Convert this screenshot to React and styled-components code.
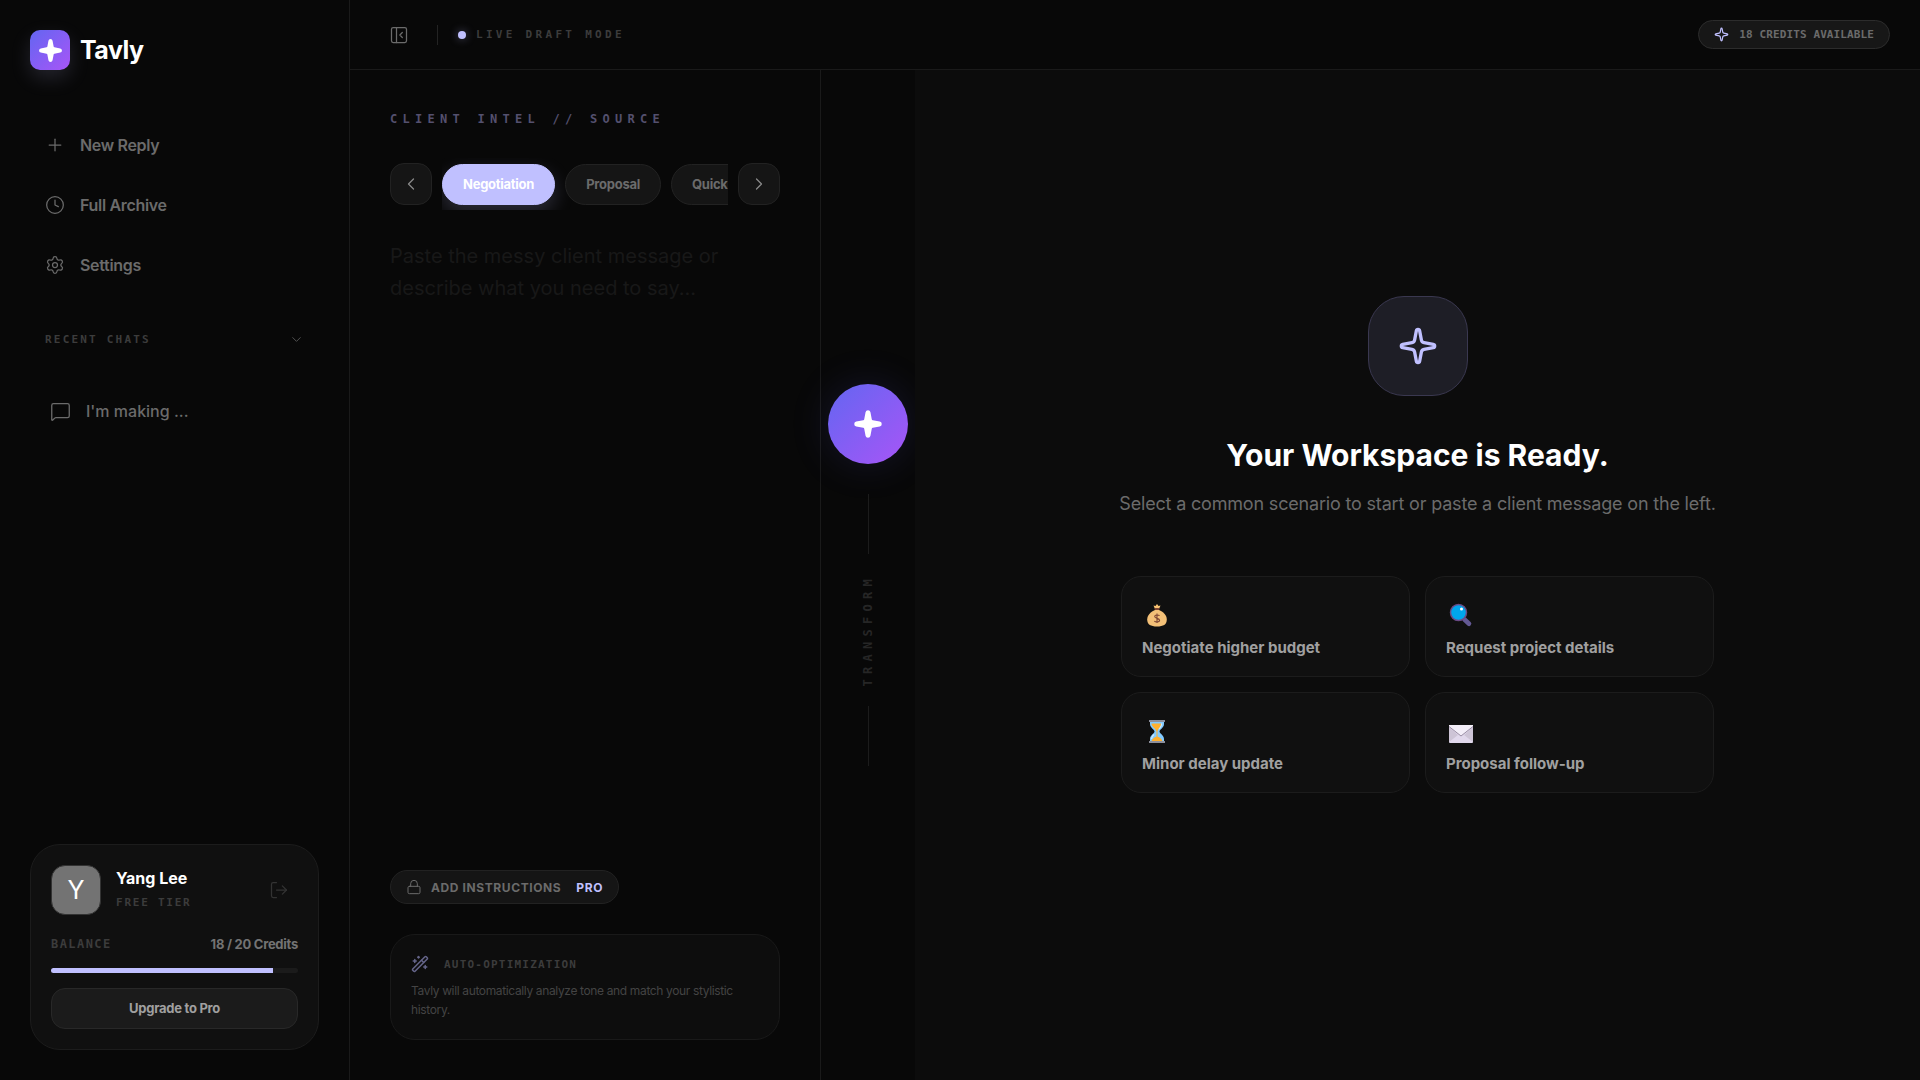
import React, { useRef, useState } from 'react';
import styled, { createGlobalStyle, css } from 'styled-components';
import {
  Plus,
  Clock,
  Settings,
  ChevronDown,
  ChevronLeft,
  ChevronRight,
  MessageSquare,
  LogOut,
  PanelLeftClose,
  Lock,
  Sparkle,
  WandSparkles,
} from 'lucide-react';

const GlobalStyle = createGlobalStyle`
  * {
    box-sizing: border-box;
  }

  html, body, #root {
    height: 100%;
    margin: 0;
  }

  body {
    background: #080808;
    color: #ffffff;
    font-family: Inter, 'Liberation Sans', sans-serif;
  }

  button {
    font-family: inherit;
    cursor: pointer;
  }
`;

const mono = css`
  font-family: 'DejaVu Sans Mono', 'Liberation Mono', monospace;
  font-weight: 700;
  text-transform: uppercase;
`;

const accent = '#c0c0ff';
const brandGradient = 'linear-gradient(135deg, #6366f1 0%, #a855f7 100%)';

const Shell = styled.div`
  display: grid;
  grid-template-columns: 350px minmax(0, 1fr);
  min-height: 100vh;
`;

const Sidebar = styled.aside`
  display: flex;
  flex-direction: column;
  padding: 30px;
  border-right: 1px solid #1a1a1a;
`;

const Brand = styled.div`
  display: flex;
  align-items: center;
  gap: 10px;
  font-size: 25px;
  font-weight: 700;
  line-height: 40px;
  letter-spacing: -0.02em;
`;

const BrandMark = styled.span`
  display: grid;
  place-items: center;
  width: 40px;
  height: 40px;
  border-radius: 10px;
  background: ${brandGradient};
  box-shadow: 0 8px 20px rgba(192, 192, 255, 0.15);
`;

const Nav = styled.nav`
  display: flex;
  flex-direction: column;
  gap: 8px;
  margin-top: 49px;
`;

const NavItem = styled.a`
  display: flex;
  align-items: center;
  gap: 15px;
  height: 52px;
  padding: 0 15px;
  color: #6b6b6b;
  font-size: 16px;
  font-weight: 600;
  letter-spacing: -0.02em;
  text-decoration: none;
`;

const RecentToggle = styled.button`
  display: flex;
  align-items: center;
  justify-content: space-between;
  height: 30px;
  margin-top: 33px;
  padding: 0 15px;
  border: 0;
  background: none;
  color: #3c3c3c;
  font-size: 11px;
  letter-spacing: 0.2em;

  && {
    ${mono}
  }

  svg {
    color: #555555;
  }
`;

const ChatLink = styled.a`
  display: flex;
  align-items: center;
  gap: 15px;
  margin-top: 37px;
  padding: 0 20px;
  color: #6b6b6b;
  font-size: 16px;
  font-weight: 500;
  line-height: 40px;
  text-decoration: none;
`;

const AccountCard = styled.section`
  display: flex;
  flex-direction: column;
  margin-top: auto;
  padding: 20px;
  border: 1px solid #1c1c1c;
  border-radius: 30px;
  background: #101010;
`;

const AccountRow = styled.div`
  display: flex;
  align-items: center;
  gap: 15px;
`;

const Avatar = styled.div`
  display: grid;
  place-items: center;
  width: 50px;
  height: 50px;
  border: 1px solid #333333;
  border-radius: 14px;
  background: #737373;
  font-size: 25px;
`;

const AccountInfo = styled.div`
  flex: 1;
`;

const AccountName = styled.div`
  padding-bottom: 2px;
  overflow: hidden;
  font-size: 16px;
  font-weight: 700;
  line-height: 16px;
  white-space: nowrap;
`;

const Tier = styled.div`
  ${mono}
  margin-top: 7px;
  color: #3c3c3c;
  font-size: 11px;
  line-height: 16px;
  letter-spacing: 0.16em;
`;

const IconButton = styled.button`
  display: grid;
  place-items: center;
  width: 38px;
  height: 38px;
  padding: 0;
  border: 0;
  background: none;
  color: ${props => props.$color};
`;

const BalanceRow = styled.div`
  display: flex;
  align-items: center;
  justify-content: space-between;
  margin-top: 21px;
  font-size: 13px;
  font-weight: 700;
  line-height: 16px;
  letter-spacing: -0.02em;
  color: #737373;
`;

const BalanceLabel = styled.span`
  ${mono}
  color: #3c3c3c;
  font-size: 12px;
  letter-spacing: 0.12em;
`;

const Track = styled.div`
  height: 5px;
  margin-top: 16px;
  border-radius: 5px;
  overflow: hidden;
  background: #1b1b1b;
`;

const Fill = styled.div`
  height: 100%;
  background: ${accent};
`;

const UpgradeButton = styled.button`
  height: 41px;
  margin-top: 15px;
  padding: 0 20px 2px;
  border: 1px solid #282828;
  border-radius: 14px;
  background: #1b1b1b;
  color: #a0a0a0;
  font-size: 13px;
  font-weight: 700;
  letter-spacing: -0.02em;
`;

const Main = styled.main`
  display: flex;
  flex-direction: column;
`;

const TopBar = styled.header`
  display: flex;
  align-items: center;
  height: 70px;
  padding: 0 30px;
  border-bottom: 1px solid #1a1a1a;
`;

const ModeLabel = styled.div`
  ${mono}
  display: flex;
  align-items: center;
  gap: 10px;
  height: 20px;
  margin-left: 19px;
  padding-left: 20px;
  border-left: 1px solid #232323;
  color: #3c3c3c;
  font-size: 11px;
  letter-spacing: 0.3em;
`;

const LiveDot = styled.span`
  width: 8px;
  height: 8px;
  border-radius: 50%;
  background: ${accent};
  box-shadow: 0 0 10px rgba(192, 192, 255, 0.4);
`;

const CreditsBadge = styled.div`
  ${mono}
  display: flex;
  align-items: center;
  gap: 10px;
  height: 29px;
  margin-left: auto;
  padding: 0 15px;
  border: 1px solid #2c2c2c;
  border-radius: 15px;
  background: #171717;
  color: #6b6b6b;
  font-size: 11px;
  letter-spacing: 0.01em;

  svg {
    color: ${accent};
  }
`;

const Workspace = styled.div`
  display: grid;
  flex: 1;
  grid-template-columns: 30% 94px minmax(0, 1fr);
`;

const SourcePanel = styled.section`
  display: flex;
  flex-direction: column;
  padding: 40px;
  border-right: 1px solid #1a1a1a;
`;

const PanelTitle = styled.h2`
  ${mono}
  margin: 0;
  color: #54506e;
  font-size: 12px;
  line-height: 18px;
  letter-spacing: 0.44em;
`;

const Scroller = styled.div`
  display: flex;
  align-items: center;
  gap: 10px;
  margin-top: 30px;
`;

const ArrowButton = styled.button`
  display: grid;
  flex-shrink: 0;
  place-items: center;
  width: 42px;
  height: 42px;
  padding: 0;
  border: 1px solid #222222;
  border-radius: 14px;
  background: #151515;
  color: #8a8a8a;
`;

const Chips = styled.div`
  display: flex;
  flex: 1;
  gap: 10px;
  padding: 6px 0 5px;
  overflow: hidden;
`;

const Chip = styled.button`
  flex-shrink: 0;
  height: 41px;
  padding: 0 20px 2px;
  border: 1px solid ${props => (props.$active ? accent : '#222222')};
  border-radius: 21px;
  background: ${props => (props.$active ? accent : '#151515')};
  box-shadow: ${props => (props.$active ? '0 8px 20px rgba(192, 192, 255, 0.2)' : 'none')};
  color: ${props => (props.$active ? '#ffffff' : '#6b6b6b')};
  font-size: 13px;
  font-weight: 700;
  letter-spacing: -0.02em;
`;

const MessageInput = styled.textarea`
  flex: 1;
  min-height: 160px;
  margin-top: 30px;
  padding: 0;
  border: 0;
  outline: 0;
  resize: none;
  background: none;
  color: #e0e0e0;
  font-family: inherit;
  font-size: 20px;
  line-height: 32px;

  &::placeholder {
    color: #181818;
    opacity: 1;
  }
`;

const InstructionsButton = styled.button`
  display: flex;
  align-items: center;
  align-self: flex-start;
  gap: 9px;
  height: 34px;
  margin-top: 20px;
  padding: 0 15px;
  border: 1px solid #222222;
  border-radius: 17px;
  background: #151515;
  color: #6b6b6b;
  font-size: 12px;
  font-weight: 700;
  letter-spacing: 0.05em;
`;

const ProTag = styled.span`
  margin-left: 6px;
  color: ${accent};
`;

const OptimizationCard = styled.section`
  margin-top: 30px;
  padding: 20px;
  border: 1px solid #191919;
  border-radius: 25px;
  background: #0d0d0d;
`;

const OptimizationTitle = styled.h3`
  ${mono}
  display: flex;
  align-items: center;
  gap: 15px;
  margin: 0 0 8px;
  color: #3c3c3c;
  font-size: 11px;
  line-height: 17px;
  letter-spacing: 0.11em;

  svg {
    color: #65658a;
  }
`;

const OptimizationText = styled.p`
  margin: 0;
  color: #444444;
  font-size: 12px;
  line-height: 19px;
  letter-spacing: -0.03em;
`;

const TransformRail = styled.div`
  display: flex;
  flex-direction: column;
  align-items: center;
  justify-content: center;
`;

const TransformButton = styled.button`
  display: grid;
  place-items: center;
  width: 80px;
  height: 80px;
  margin-bottom: 30px;
  padding: 0;
  border: 0;
  border-radius: 50%;
  background: ${brandGradient};
  box-shadow: 0 0 40px rgba(99, 102, 241, 0.15);
  color: #ffffff;
`;

const RailLine = styled.div`
  width: 1px;
  height: 60px;
  background: #1c1c1c;
`;

const RailLabel = styled.div`
  ${mono}
  margin: 20px 0;
  color: #262626;
  font-size: 12px;
  line-height: 14px;
  letter-spacing: 0.44em;
  writing-mode: vertical-rl;
  transform: rotate(180deg);
`;

const OutputPanel = styled.section`
  display: flex;
  flex-direction: column;
  align-items: center;
  justify-content: center;
  padding: 40px 40px 102px;
  background: #0c0c0c;
`;

const HeroIcon = styled.div`
  display: grid;
  place-items: center;
  width: 100px;
  height: 100px;
  border: 1px solid #3a3850;
  border-radius: 36px;
  background: #1e1e26;
  color: ${accent};
`;

const Heading = styled.h1`
  margin: 40px 0 0;
  font-size: 30px;
  font-weight: 700;
  line-height: 39px;
`;

const Subheading = styled.p`
  margin: 16px 0 0;
  color: #6b6b6b;
  font-size: 18px;
  line-height: 26px;
  letter-spacing: -0.01em;
`;

const ScenarioGrid = styled.div`
  display: grid;
  grid-template-columns: 1fr 1fr;
  gap: 15px;
  width: 100%;
  max-width: 593px;
  margin-top: 59px;
`;

const ScenarioCard = styled.button`
  display: flex;
  flex-direction: column;
  align-items: flex-start;
  gap: 7px;
  height: 101px;
  padding: 26px 20px 16px;
  border: 1px solid #1c1c1c;
  border-radius: 20px;
  background: #101010;
  color: #a0a0a0;
  font-size: 15px;
  font-weight: 700;
  line-height: 24px;
`;

const MoneyBag = () => (
  <svg width="30" height="26" viewBox="0 0 30 26" aria-hidden="true">
    <path d="M11.5 2.500l2 .5 1.500-2 1.500 2 2-.5-1.500 3.500h-4z" fill="#f9c372" />
    <rect x="12.5" y="5" width="5" height="2" rx="1" fill="#7d4533" />
    <path d="M13 7h4c4 1.500 7.800 5 7.800 9.500 0 5-3.500 7-9.800 7s-9.800-2-9.800-7C5.200 12 9 8.500 13 7z" fill="#f3c077" />
    <path d="M17.500 12.800c-.5-1-4.800-1.400-4.800.8 0 2.300 4.900 1.300 4.900 3.700 0 2.200-4.500 2-5.200.6M15 10.500v9.500" fill="none" stroke="#7d4533" strokeWidth="1.1" />
  </svg>
);

const Magnifier = () => (
  <svg width="30" height="26" viewBox="0 0 30 26" aria-hidden="true">
    <path d="M18.500 16.500l4.500 4.200" stroke="#635994" strokeWidth="4.600" strokeLinecap="round" />
    <circle cx="12.5" cy="9.500" r="8" fill="#00a6ed" stroke="#6b4a86" strokeWidth="1.5" />
    <circle cx="15.500" cy="6" r="1.500" fill="#ffffff" />
  </svg>
);

const Hourglass = () => (
  <svg width="30" height="26" viewBox="0 0 30 26" aria-hidden="true">
    <path d="M8 2h14v3c0 4-4.500 5.500-4.500 7.500S22 16 22 20v3H8v-3c0-4 4.500-5.500 4.500-7.500S8 9 8 5z" fill="#83cbff" />
    <path d="M19.500 4.500c0 3-1 4-3 5.500M12 15.500c-1.500 1.200-2.400 2.500-2.500 4.500" fill="none" stroke="#d3edff" strokeWidth="1.2" />
    <path d="M9.500 4.500h9.500c0 3.500-3 5-3.500 8h-1c-.5-3-5-4.500-5-8zM14.500 12h1v5.500c2 1 4.800 2.500 4.800 5H9.700c0-2.500 2.800-4 4.800-5z" fill="#ffb02e" />
    <path d="M7 1h16v2H7zM7 22h16v2H7z" fill="#8d8f9b" />
  </svg>
);

const Envelope = () => (
  <svg width="30" height="26" viewBox="0 0 30 26" aria-hidden="true">
    <rect x="3" y="6" width="24" height="18" rx="1" fill="#e1d8ec" />
    <path d="M3 8l9 8-9 7zM27 8l-9 8 9 7z" fill="#cdc4d6" />
    <path d="M3 6h24v1.500L15 17 3 7.500z" fill="#f3eef8" />
    <path d="M3 7.500L15 17 27 7.500" fill="none" stroke="#998ea4" strokeWidth="1" />
  </svg>
);

const scenarios = [
  { label: 'Negotiate higher budget', icon: <MoneyBag /> },
  { label: 'Request project details', icon: <Magnifier /> },
  { label: 'Minor delay update', icon: <Hourglass /> },
  { label: 'Proposal follow-up', icon: <Envelope /> },
];

const categories = ['Negotiation', 'Proposal', 'Quick'];

const credits = { left: 18, total: 20 };

export default function App() {
  const [category, setCategory] = useState('Negotiation');
  const [message, setMessage] = useState('');
  const chipsRef = useRef(null);

  const scrollChips = (distance) => {
    chipsRef.current.scrollBy({ left: distance, behavior: 'smooth' });
  };

  return (
    <>
      <GlobalStyle />
      <Shell>
        <Sidebar>
          <Brand>
            <BrandMark>
              <Sparkle size={25} fill="currentColor" />
            </BrandMark>
            Tavly
          </Brand>

          <Nav>
            <NavItem href="#new">
              <Plus size={20} strokeWidth={1.5} />
              New Reply
            </NavItem>
            <NavItem href="#archive">
              <Clock size={20} strokeWidth={1.5} />
              Full Archive
            </NavItem>
            <NavItem href="#settings">
              <Settings size={20} strokeWidth={1.5} />
              Settings
            </NavItem>
          </Nav>

          <RecentToggle>
            Recent Chats
            <ChevronDown size={15} strokeWidth={1.5} />
          </RecentToggle>
          <ChatLink href="#chat">
            <MessageSquare size={21} strokeWidth={1.5} />
            I'm making ...
          </ChatLink>

          <AccountCard>
            <AccountRow>
              <Avatar>Y</Avatar>
              <AccountInfo>
                <AccountName>Yang Lee</AccountName>
                <Tier>Free Tier</Tier>
              </AccountInfo>
              <IconButton $color="#333333" aria-label="Log out">
                <LogOut size={20} strokeWidth={1.5} />
              </IconButton>
            </AccountRow>
            <BalanceRow>
              <BalanceLabel>Balance</BalanceLabel>
              {credits.left} / {credits.total} Credits
            </BalanceRow>
            <Track>
              <Fill style={{ width: `${(credits.left / credits.total) * 100}%` }} />
            </Track>
            <UpgradeButton>Upgrade to Pro</UpgradeButton>
          </AccountCard>
        </Sidebar>

        <Main>
          <TopBar>
            <IconButton $color="#6b6b6b" aria-label="Collapse sidebar">
              <PanelLeftClose size={20} strokeWidth={1.5} />
            </IconButton>
            <ModeLabel>
              <LiveDot />
              Live Draft Mode
            </ModeLabel>
            <CreditsBadge>
              <Sparkle size={15} />
              {credits.left} Credits Available
            </CreditsBadge>
          </TopBar>

          <Workspace>
            <SourcePanel>
              <PanelTitle>Client Intel // Source</PanelTitle>
              <Scroller>
                <ArrowButton aria-label="Previous" onClick={() => scrollChips(-120)}>
                  <ChevronLeft size={20} strokeWidth={1.5} />
                </ArrowButton>
                <Chips ref={chipsRef}>
                  {categories.map(name => (
                    <Chip key={name} $active={name === category} onClick={() => setCategory(name)}>
                      {name}
                    </Chip>
                  ))}
                </Chips>
                <ArrowButton aria-label="Next" onClick={() => scrollChips(120)}>
                  <ChevronRight size={20} strokeWidth={1.5} />
                </ArrowButton>
              </Scroller>
              <MessageInput
                aria-label="Client message"
                placeholder="Paste the messy client message or describe what you need to say..."
                value={message}
                onChange={e => setMessage(e.target.value)}
              />
              <InstructionsButton>
                <Lock size={16} strokeWidth={1.5} />
                ADD INSTRUCTIONS
                <ProTag>PRO</ProTag>
              </InstructionsButton>
              <OptimizationCard>
                <OptimizationTitle>
                  <WandSparkles size={18} strokeWidth={2} />
                  Auto-Optimization
                </OptimizationTitle>
                <OptimizationText>
                  Tavly will automatically analyze tone and match your stylistic history.
                </OptimizationText>
              </OptimizationCard>
            </SourcePanel>

            <TransformRail>
              <TransformButton aria-label="Transform">
                <Sparkle size={30} fill="currentColor" />
              </TransformButton>
              <RailLine />
              <RailLabel>Transform</RailLabel>
              <RailLine />
            </TransformRail>

            <OutputPanel>
              <HeroIcon>
                <Sparkle size={40} />
              </HeroIcon>
              <Heading>Your Workspace is Ready.</Heading>
              <Subheading>Select a common scenario to start or paste a client message on the left.</Subheading>
              <ScenarioGrid>
                {scenarios.map(({ label, icon }) => (
                  <ScenarioCard key={label}>
                    {icon}
                    {label}
                  </ScenarioCard>
                ))}
              </ScenarioGrid>
            </OutputPanel>
          </Workspace>
        </Main>
      </Shell>
    </>
  );
}
